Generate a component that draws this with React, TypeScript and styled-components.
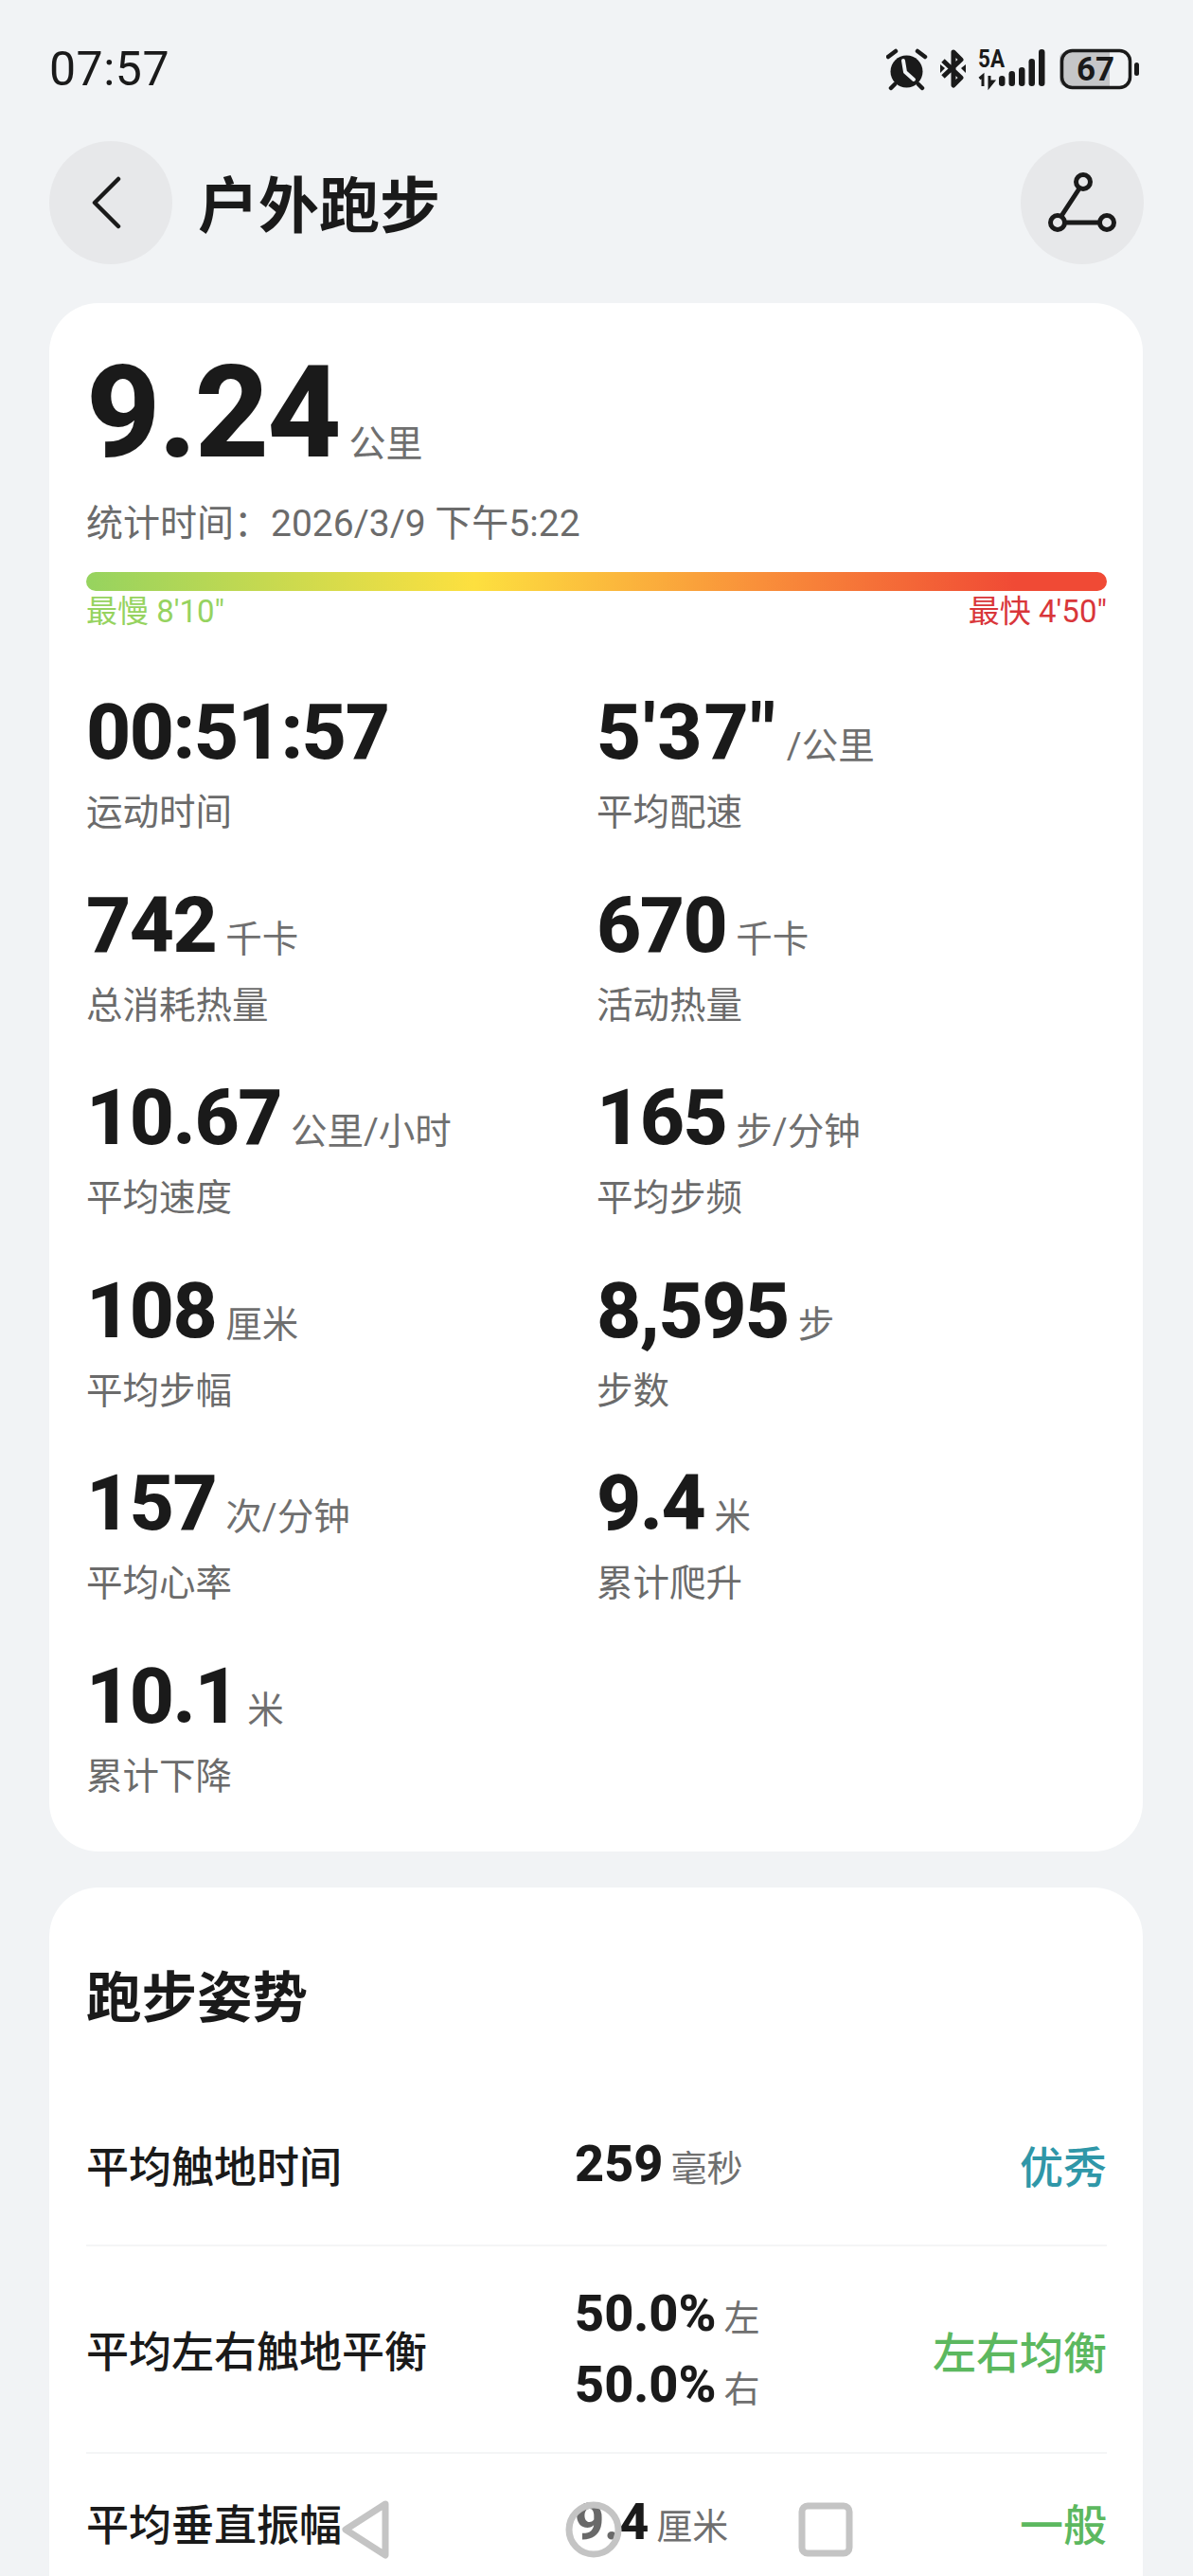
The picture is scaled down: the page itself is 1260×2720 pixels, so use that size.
import React from 'react';
import styled, { createGlobalStyle } from 'styled-components';

const GlobalStyle = createGlobalStyle`
  html, body {
    margin: 0;
    padding: 0;
    background: #f1f3f5;
  }
  * { box-sizing: border-box; }
`;

const fontStack = `Roboto, "Noto Sans CJK SC", sans-serif`;

const Page = styled.div`
  position: relative;
  width: 1260px;
  height: 2720px;
  overflow: hidden;
  background: #f1f3f5;
  font-family: ${fontStack};
  color: #1a1a1a;
`;

const StatusBar = styled.div`
  display: flex;
  align-items: center;
  justify-content: space-between;
  height: 149px;
  padding: 0 57px 3px 52px;
`;

const Clock = styled.span`
  font-size: 50px;
  letter-spacing: 0.5px;
`;

const StatusIcons = styled.div`
  display: flex;
  align-items: center;
`;

const Header = styled.header`
  display: flex;
  align-items: center;
  height: 130px;
  padding: 0 52px;
  gap: 27px;
`;

const RoundButton = styled.button<{ $end?: boolean }>`
  display: flex;
  align-items: center;
  justify-content: center;
  width: 130px;
  height: 130px;
  padding: 0;
  border: 0;
  border-radius: 50%;
  background: #e7e8ea;
  margin-left: ${({ $end }) => ($end ? 'auto' : '0')};
`;

const BackIcon = styled.svg`
  margin-right: 8px;
`;

const Title = styled.h1`
  margin: 0;
  padding-bottom: 5px;
  font-size: 64px;
  font-weight: 700;
`;

const Card = styled.section`
  margin: 0 53px 38px 52px;
  padding: 0 38px 100px 39px;
  background: #fff;
  border-radius: 52px;
`;

const SummaryCard = styled(Card)`
  margin-top: 41px;
  height: 1635px;
  padding-top: 58px;
`;

const Distance = styled.div`
  display: flex;
  align-items: baseline;
  line-height: 116px;
`;

const DistanceValue = styled.span`
  font-size: 136px;
  font-weight: 800;
  letter-spacing: -2px;
`;

const Unit = styled.span`
  font-size: 39px;
  color: #6f6f6f;
  margin-left: 10px;
`;

const StatTime = styled.div`
  margin-top: 1px;
  font-size: 39px;
  line-height: 50px;
  color: #6b6b6b;
`;

const PaceBar = styled.div`
  height: 20px;
  margin-top: 26px;
  border-radius: 10px;
  background: linear-gradient(90deg, #96d35f 0%, #fde03f 38%, #f98f3a 66%, #f04a35 91%, #f04a35 100%);
`;

const PaceRange = styled.div`
  display: flex;
  justify-content: space-between;
  font-size: 33px;
  line-height: 44px;
`;

const PaceLabel = styled.span<{ $color: string }>`
  color: ${({ $color }) => $color};
`;

const StatGrid = styled.div`
  display: grid;
  grid-template-columns: 539px 1fr;
  grid-auto-rows: 203.5px;
  margin-top: 63px;
`;

const StatValueRow = styled.div`
  display: flex;
  align-items: baseline;
  height: 84px;
  line-height: 84px;
`;

const StatValue = styled.span<{ $tracking?: number }>`
  font-size: 82px;
  font-weight: 800;
  letter-spacing: ${({ $tracking }) => $tracking ?? -1.5}px;
`;

const StatUnit = styled.span`
  font-size: 38.5px;
  color: #6f6f6f;
  margin-left: 10px;
`;

const StatLabel = styled.div`
  margin-top: 18px;
  font-size: 38.5px;
  line-height: 50px;
  color: #6b6b6b;
`;

const SectionTitle = styled.h2`
  margin: 0 0 50px;
  padding-top: 77px;
  font-size: 58.5px;
  line-height: 80px;
  font-weight: 700;
`;

const MetricRow = styled.div<{ $height: number; $last?: boolean }>`
  display: grid;
  grid-template-columns: 516px 1fr auto;
  align-items: center;
  height: ${({ $height }) => $height}px;
  border-bottom: ${({ $last }) => ($last ? '0' : '2px solid #f4f5f6')};
`;

const MetricName = styled.div`
  font-size: 45px;
  font-weight: 500;
`;

const MetricValues = styled.div`
  display: flex;
  flex-direction: column;
  padding-top: 5px;
`;

const MetricValueLine = styled.div`
  display: flex;
  align-items: baseline;
  line-height: 69px;
`;

const MetricValue = styled.span`
  font-size: 54px;
  font-weight: 800;
`;

const MetricUnit = styled.span`
  font-size: 38px;
  color: #6f6f6f;
  margin-left: 8px;
`;

const Rating = styled.div<{ $color: string }>`
  font-size: 46px;
  font-weight: 500;
  color: ${({ $color }) => $color};
`;

const NavOverlay = styled.div`
  position: absolute;
  left: 361px;
  top: 2639px;
  width: 540px;
  height: 64px;
  display: flex;
  align-items: center;
  justify-content: space-between;
  pointer-events: none;
`;

const stats: { value: string; unit?: string; label: string; tracking?: number }[] = [
  { value: '00:51:57', label: '运动时间' },
  { value: `5'37"`, unit: '/公里', label: '平均配速', tracking: 2 },
  { value: '742', unit: '千卡', label: '总消耗热量' },
  { value: '670', unit: '千卡', label: '活动热量' },
  { value: '10.67', unit: '公里/小时', label: '平均速度' },
  { value: '165', unit: '步/分钟', label: '平均步频' },
  { value: '108', unit: '厘米', label: '平均步幅' },
  { value: '8,595', unit: '步', label: '步数' },
  { value: '157', unit: '次/分钟', label: '平均心率' },
  { value: '9.4', unit: '米', label: '累计爬升' },
  { value: '10.1', unit: '米', label: '累计下降' },
];

const metrics = [
  { name: '平均触地时间', values: [{ value: '259', unit: '毫秒' }], rating: '优秀', color: '#2f97a8', height: 172 },
  {
    name: '平均左右触地平衡',
    values: [
      { value: '50.0%', unit: '左' },
      { value: '50.0%', unit: '右' },
    ],
    rating: '左右均衡',
    color: '#5cb85f',
    height: 219,
  },
  { name: '平均垂直振幅', values: [{ value: '9.4', unit: '厘米' }], rating: '一般', color: '#5cb85f', height: 144 },
];

const StatusGlyphs = () => (
  <svg width="267" height="46" viewBox="0 0 267 46" fill="none">
    {/* alarm */}
    <circle cx="21.5" cy="25.5" r="17" fill="#1a1a1a" />
    <path d="M2 10l8-6M41 10l-8-6M9 39l-4 4M34 39l4 4" stroke="#1a1a1a" strokeWidth="4.5" strokeLinecap="round" />
    <path d="M18 14l2 12 9 8" stroke="#f1f3f5" strokeWidth="4" strokeLinecap="round" strokeLinejoin="round" />
    {/* bluetooth */}
    <path d="M60 14l19 18-8 8V5l8 8-19 18" stroke="#1a1a1a" strokeWidth="5" strokeLinejoin="round" />
    <path d="M57 18l5 4-5 5zM84 18l-5 4 5 5z" fill="#1a1a1a" />
    {/* signal */}
    <text x="97" y="21" fontFamily="Roboto, sans-serif" fontSize="25" fontWeight="700" textLength="28" lengthAdjust="spacingAndGlyphs" fill="#1a1a1a">5A</text>
    <path d="M102 41V30M98.5 33l3.5-3v3" stroke="#1a1a1a" strokeWidth="3" />
    <path d="M109 30v11l4-5h-4" stroke="#1a1a1a" strokeWidth="3" />
    <rect x="119" y="30" width="6.5" height="11" rx="3.2" fill="#1a1a1a" />
    <rect x="129.5" y="25" width="6.5" height="16" rx="3.2" fill="#1a1a1a" />
    <rect x="140" y="21" width="6.5" height="20" rx="3.2" fill="#1a1a1a" />
    <rect x="150.5" y="12" width="6.5" height="29" rx="3.2" fill="#1a1a1a" />
    <rect x="161" y="2" width="6.5" height="39" rx="3.2" fill="#1a1a1a" />
    {/* battery */}
    <path d="M189 5h47v36h-47a6 6 0 0 1-6-6V11a6 6 0 0 1 6-6z" fill="#c5c6c8" />
    <rect x="185.5" y="3.5" width="72" height="39" rx="11" stroke="#1a1a1a" strokeWidth="3.5" />
    <text x="221" y="35" textAnchor="middle" fontFamily="Roboto, sans-serif" fontSize="35" fontWeight="700" fill="#1a1a1a">67</text>
    <rect x="262" y="16" width="5" height="14" rx="2.5" fill="#1a1a1a" />
  </svg>
);

export default function App() {
  return (
    <Page>
      <GlobalStyle />
      <StatusBar>
        <Clock>07:57</Clock>
        <StatusIcons>
          <StatusGlyphs />
        </StatusIcons>
      </StatusBar>
      <Header>
        <RoundButton>
          <BackIcon width="32" height="58" viewBox="0 0 32 58" fill="none">
            <path d="M28 4L3 29l25 25" stroke="#1a1a1a" strokeWidth="4.5" strokeLinecap="round" strokeLinejoin="round" />
          </BackIcon>
        </RoundButton>
        <Title>户外跑步</Title>
        <RoundButton $end>
          <svg width="74" height="66" viewBox="0 0 74 66" fill="none">
            <circle cx="38" cy="11" r="7.5" stroke="#1a1a1a" strokeWidth="5" />
            <circle cx="11" cy="54" r="7.5" stroke="#1a1a1a" strokeWidth="5" />
            <circle cx="63" cy="54" r="7.5" stroke="#1a1a1a" strokeWidth="5" />
            <path d="M34 18L15 47M19 54h36" stroke="#1a1a1a" strokeWidth="5" />
          </svg>
        </RoundButton>
      </Header>
      <SummaryCard>
        <Distance>
          <DistanceValue>9.24</DistanceValue>
          <Unit>公里</Unit>
        </Distance>
        <StatTime>统计时间：2026/3/9 下午5:22</StatTime>
        <PaceBar />
        <PaceRange>
          <PaceLabel $color="#96d35f">最慢 8'10"</PaceLabel>
          <PaceLabel $color="#d9363a">最快 4'50"</PaceLabel>
        </PaceRange>
        <StatGrid>
          {stats.map((stat) => (
            <div key={stat.label}>
              <StatValueRow>
                <StatValue $tracking={stat.tracking}>{stat.value}</StatValue>
                {stat.unit && <StatUnit>{stat.unit}</StatUnit>}
              </StatValueRow>
              <StatLabel>{stat.label}</StatLabel>
            </div>
          ))}
        </StatGrid>
      </SummaryCard>
      <Card>
        <SectionTitle>跑步姿势</SectionTitle>
        {metrics.map((metric, i) => (
          <MetricRow key={metric.name} $height={metric.height} $last={i === metrics.length - 1}>
            <MetricName>{metric.name}</MetricName>
            <MetricValues>
              {metric.values.map((v) => (
                <MetricValueLine key={v.unit}>
                  <MetricValue>{v.value}</MetricValue>
                  <MetricUnit>{v.unit}</MetricUnit>
                </MetricValueLine>
              ))}
            </MetricValues>
            <Rating $color={metric.color}>{metric.rating}</Rating>
          </MetricRow>
        ))}
      </Card>
      <NavOverlay>
        <svg width="50" height="64" viewBox="0 0 50 64" fill="none">
          <path d="M46 5L4 32l42 27z" stroke="#c4c4c4" strokeWidth="7" strokeLinejoin="round" />
        </svg>
        <svg width="60" height="62" viewBox="0 0 60 62" fill="none">
          <circle cx="30" cy="31" r="26" fill="#ffffff" fillOpacity="0.35" stroke="#c4c4c4" strokeWidth="7" />
        </svg>
        <svg width="58" height="58" viewBox="0 0 58 58" fill="none">
          <rect x="4" y="4" width="50" height="50" rx="6" stroke="#c4c4c4" strokeWidth="7" />
        </svg>
      </NavOverlay>
    </Page>
  );
}
